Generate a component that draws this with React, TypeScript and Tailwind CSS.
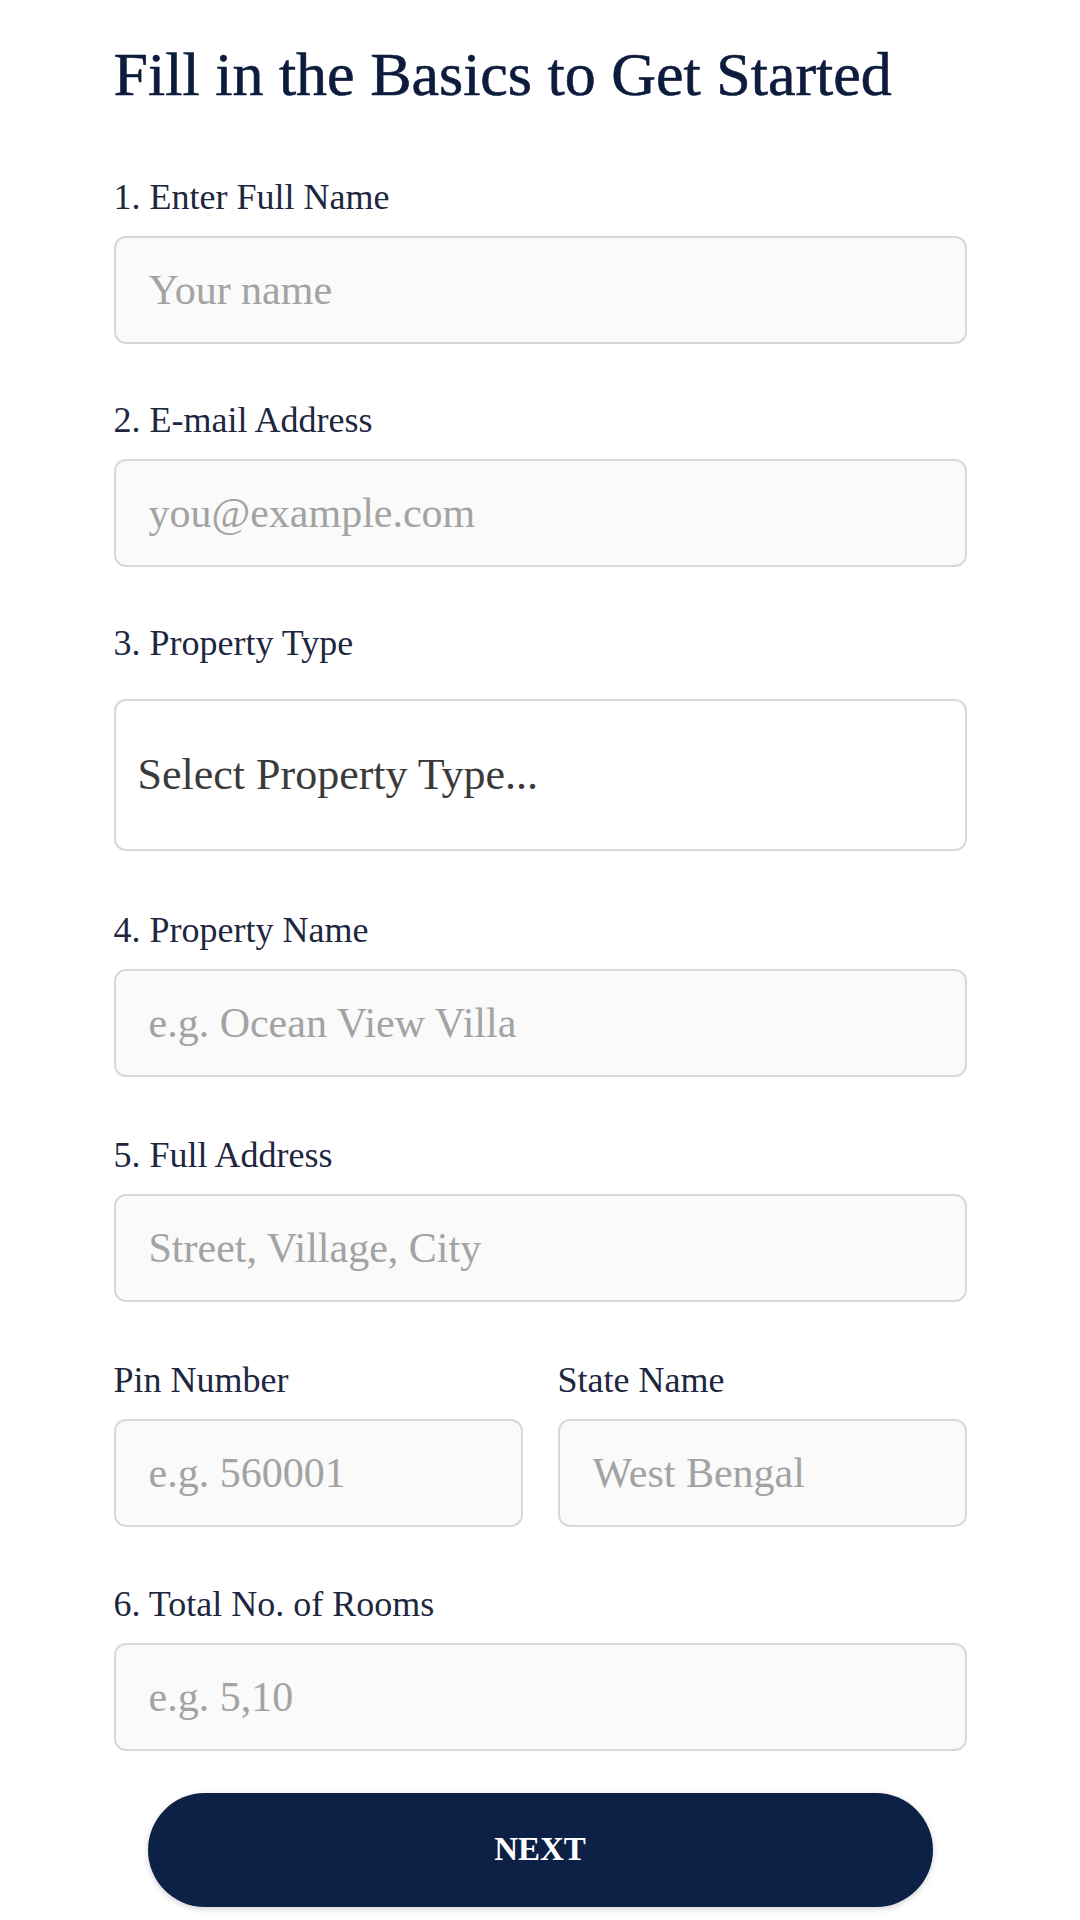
import React from "react";

const font = { fontFamily: '"Liberation Serif", "Times New Roman", serif' };

const inputClass =
  "w-full h-[108px] rounded-[12px] border-2 border-[#d8d8d8] bg-[#fafafa] pl-[33px] pr-4 text-[42px] text-[#333] placeholder:text-[#a3a3a3] outline-none";

function Field({
  label,
  placeholder,
  className = "",
}: {
  label: string;
  placeholder: string;
  className?: string;
}) {
  return (
    <div className={`flex flex-col ${className}`}>
      <label className="text-[36px] leading-[44px] text-[#1e2740] mb-[17px]">
        {label}
      </label>
      <input className={inputClass} placeholder={placeholder} />
    </div>
  );
}

export default function App() {
  return (
    <div className="w-[1080px] min-h-[1920px] bg-white" style={font}>
      <div className="w-[853px] mx-auto pt-[38px] flex flex-col">
        <h1 className="text-[62px] leading-[72px] text-[#0d1b3d] [-webkit-text-stroke:0.6px_#0d1b3d]">
          Fill in the Basics to Get Started
        </h1>

        <Field
          className="mt-[65px]"
          label="1. Enter Full Name"
          placeholder="Your name"
        />
        <Field
          className="mt-[54px]"
          label="2. E-mail Address"
          placeholder="you@example.com"
        />

        <div className="flex flex-col mt-[54px]">
          <label className="text-[36px] leading-[44px] text-[#1e2740]">
            3. Property Type
          </label>
          <div className="mt-[34px] h-[152px] rounded-[12px] border-2 border-[#d8d8d8] bg-white pl-[22px] flex items-center text-[44px] text-[#3a3a3a]">
            Select Property Type...
          </div>
        </div>

        <Field
          className="mt-[57px]"
          label="4. Property Name"
          placeholder="e.g. Ocean View Villa"
        />
        <Field
          className="mt-[56px]"
          label="5. Full Address"
          placeholder="Street, Village, City"
        />

        <div className="grid grid-cols-2 gap-x-[35px] mt-[56px]">
          <Field label="Pin Number" placeholder="e.g. 560001" />
          <Field label="State Name" placeholder="West Bengal" />
        </div>

        <Field
          className="mt-[55px]"
          label="6. Total No. of Rooms"
          placeholder="e.g. 5,10"
        />

        <button className="mt-[42px] mx-auto w-[785px] h-[114px] rounded-full bg-[#0d2046] text-white text-[33px] font-bold shadow-[0_2px_6px_rgba(0,0,0,0.18)]">
          NEXT
        </button>
      </div>
    </div>
  );
}
